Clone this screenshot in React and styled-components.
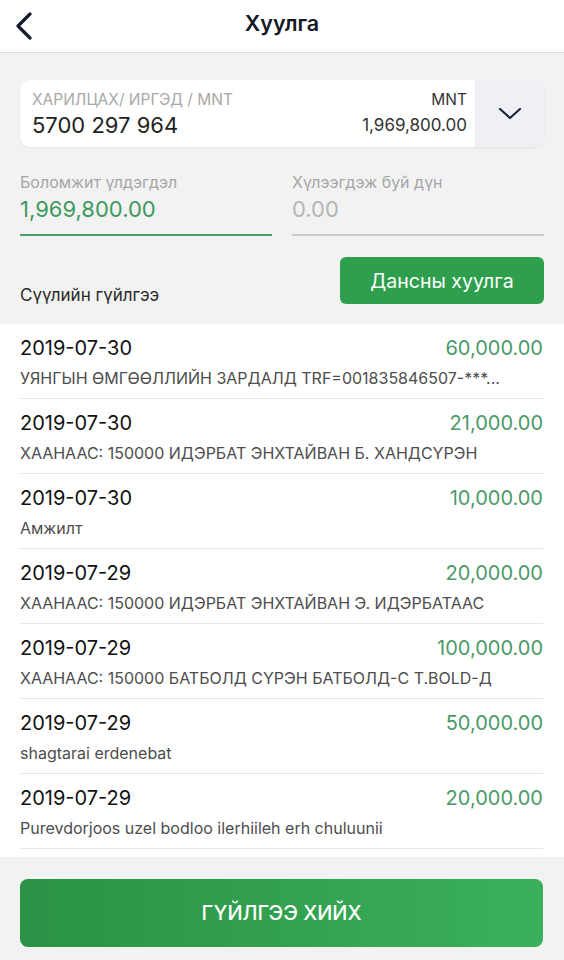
import React from 'react';
import styled, { createGlobalStyle } from 'styled-components';

const GlobalStyle = createGlobalStyle`
  html, body {
    margin: 0;
    padding: 0;
    background: #f2f2f2;
    font-family: Inter, "Noto Sans", sans-serif;
  }
`;

const Page = styled.div`
  width: 564px;
  height: 960px;
  background: #f2f2f2;
  display: flex;
  flex-direction: column;
  overflow: hidden;
`;

const Header = styled.div`
  height: 52px;
  background: #fff;
  border-bottom: 1px solid #dcdcdc;
  display: grid;
  grid-template-columns: 60px 1fr 60px;
  align-items: center;
`;

const BackButton = styled.div`
  display: flex;
  align-items: center;
  padding-left: 15px;
  height: 100%;
`;

const Title = styled.div`
  text-align: center;
  font-size: 21.5px;
  font-weight: 600;
  color: #151826;
  margin-top: -6px;
`;

const Top = styled.div`
  padding: 27px 20px 0 20px;
`;

const AccountCard = styled.div`
  display: flex;
  height: 67px;
  border-radius: 10px;
  overflow: hidden;
  box-shadow: 0 1px 3px rgba(0, 0, 0, 0.06);
`;

const AccountMain = styled.div`
  flex: 1;
  background: #fff;
  display: flex;
  justify-content: space-between;
  padding: 10px 8px 0 12px;
`;

const Col = styled.div`
  display: flex;
  flex-direction: column;
  align-items: ${(p) => (p.$right ? 'flex-end' : 'flex-start')};
`;

const SmallLabel = styled.div`
  font-size: 15.5px;
  line-height: 20px;
  color: ${(p) => (p.$dark ? '#333' : '#a8a8a8')};
`;

const AccountNo = styled.div`
  font-size: 22px;
  line-height: 30px;
  color: #222;
`;

const AccountSum = styled.div`
  font-size: 17px;
  line-height: 30px;
  color: #333;
`;

const Dropdown = styled.div`
  width: 69px;
  background: #efeff4;
  display: flex;
  align-items: center;
  justify-content: center;
`;

const Balances = styled.div`
  display: grid;
  grid-template-columns: 1fr 1fr;
  gap: 20px;
  margin-top: 24px;
`;

const Field = styled.div`
  border-bottom: 2px solid ${(p) => (p.$active ? '#4c9d6a' : '#cbcbcb')};
  padding-bottom: 11px;
`;

const FieldLabel = styled.div`
  font-size: 16px;
  line-height: 22px;
  color: #a6a6a6;
`;

const FieldValue = styled.div`
  font-size: 22px;
  line-height: 28px;
  margin-top: 2px;
  color: ${(p) => (p.$active ? '#3d9a5e' : '#b5b5b5')};
`;

const ActionRow = styled.div`
  display: flex;
  justify-content: space-between;
  align-items: flex-end;
  margin-top: 21px;
  padding-bottom: 20px;
`;

const SectionTitle = styled.div`
  font-size: 17px;
  line-height: 20px;
  color: #2a2a2a;
  margin-bottom: -1px;
`;

const StatementButton = styled.button`
  width: 204px;
  height: 47px;
  border: none;
  border-radius: 6px;
  background: #2e9f4d;
  color: #fff;
  font-family: inherit;
  font-size: 19.5px;
  padding: 0;
`;

const List = styled.div`
  background: #fff;
  padding: 0 21px 8px 20px;
`;

const Row = styled.div`
  padding: 12px 0 10px;
  border-bottom: 1px solid #e6e6e6;
`;

const RowTop = styled.div`
  display: flex;
  justify-content: space-between;
  align-items: center;
  font-size: 20px;
  line-height: 24px;
`;

const DateText = styled.span`
  color: #111;
`;

const Amount = styled.span`
  color: #4a9a68;
`;

const Desc = styled.div`
  margin-top: 8px;
  font-size: 16px;
  line-height: 20px;
  color: #4d4d4d;
  white-space: nowrap;
`;

const Footer = styled.div`
  padding: 22px 21px 0 20px;
`;

const MainButton = styled.button`
  width: 100%;
  height: 68px;
  border: none;
  border-radius: 8px;
  background: linear-gradient(90deg, #2a9244 0%, #3bb05b 100%);
  color: #fff;
  font-family: inherit;
  font-size: 20px;
  font-weight: 500;
  padding: 0;
`;

const transactions = [
  { date: '2019-07-30', amount: '60,000.00', desc: 'УЯНГЫН ӨМГӨӨЛЛИЙН ЗАРДАЛД TRF=001835846507-***...' },
  { date: '2019-07-30', amount: '21,000.00', desc: 'ХААНААС: 150000 ИДЭРБАТ ЭНХТАЙВАН Б. ХАНДСҮРЭН' },
  { date: '2019-07-30', amount: '10,000.00', desc: 'Амжилт' },
  { date: '2019-07-29', amount: '20,000.00', desc: 'ХААНААС: 150000 ИДЭРБАТ ЭНХТАЙВАН Э. ИДЭРБАТААС' },
  { date: '2019-07-29', amount: '100,000.00', desc: 'ХААНААС: 150000 БАТБОЛД СҮРЭН БАТБОЛД-С T.BOLD-Д' },
  { date: '2019-07-29', amount: '50,000.00', desc: 'shagtarai erdenebat' },
  { date: '2019-07-29', amount: '20,000.00', desc: 'Purevdorjoos uzel bodloo ilerhiileh erh chuluunii' },
];

function App() {
  return (
    <Page>
      <GlobalStyle />
      <Header>
        <BackButton>
          <svg width="18" height="28" viewBox="0 0 18 28">
            <path d="M15 2 L3 14 L15 26" fill="none" stroke="#151a2e" strokeWidth="3.2" strokeLinecap="round" strokeLinejoin="round" />
          </svg>
        </BackButton>
        <Title>Хуулга</Title>
        <div />
      </Header>

      <Top>
        <AccountCard>
          <AccountMain>
            <Col>
              <SmallLabel>ХАРИЛЦАХ/ ИРГЭД / MNT</SmallLabel>
              <AccountNo>5700 297 964</AccountNo>
            </Col>
            <Col $right>
              <SmallLabel $dark>MNT</SmallLabel>
              <AccountSum>1,969,800.00</AccountSum>
            </Col>
          </AccountMain>
          <Dropdown>
            <svg width="24" height="14" viewBox="0 0 24 14">
              <path d="M2 2 L12 11 L22 2" fill="none" stroke="#1d2740" strokeWidth="2.2" strokeLinecap="round" strokeLinejoin="round" />
            </svg>
          </Dropdown>
        </AccountCard>

        <Balances>
          <Field $active>
            <FieldLabel>Боломжит үлдэгдэл</FieldLabel>
            <FieldValue $active>1,969,800.00</FieldValue>
          </Field>
          <Field>
            <FieldLabel>Хүлээгдэж буй дүн</FieldLabel>
            <FieldValue>0.00</FieldValue>
          </Field>
        </Balances>

        <ActionRow>
          <SectionTitle>Сүүлийн гүйлгээ</SectionTitle>
          <StatementButton>Дансны хуулга</StatementButton>
        </ActionRow>
      </Top>

      <List>
        {transactions.map((t, i) => (
          <Row key={i}>
            <RowTop>
              <DateText>{t.date}</DateText>
              <Amount>{t.amount}</Amount>
            </RowTop>
            <Desc>{t.desc}</Desc>
          </Row>
        ))}
      </List>

      <Footer>
        <MainButton>ГҮЙЛГЭЭ ХИЙХ</MainButton>
      </Footer>
    </Page>
  );
}

export default App;
